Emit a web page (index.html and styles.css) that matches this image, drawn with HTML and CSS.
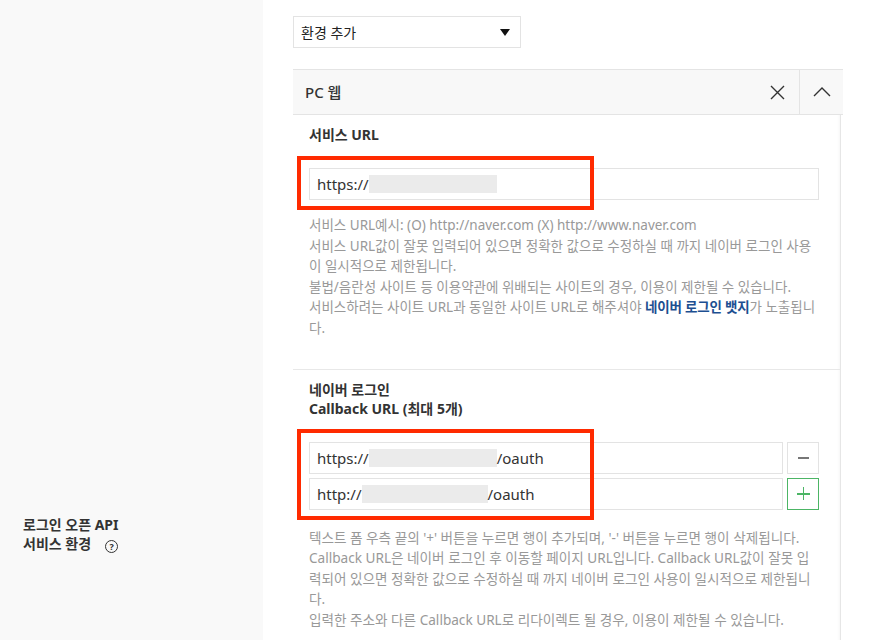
FILE: index.html
```html
<!DOCTYPE html>
<html lang="ko">
<head>
<meta charset="utf-8">
<title>로그인 오픈 API 서비스 환경</title>
<link rel="stylesheet" href="styles.css">
</head>
<body>
<div class="api-row">
  <div class="api-head">
    <div class="head-title">로그인 오픈 API<br>서비스 환경<span class="q-icon">?</span></div>
  </div>

  <div class="api-cell">
    <div class="env-select">환경 추가<span class="caret"></span></div>

    <div class="env-panel">
      <div class="env-title">
        <span class="env-name">PC 웹</span>
        <button class="icon-btn" type="button">
          <svg width="15" height="15" viewBox="0 0 15 15"><path d="M1 1l13 13M14 1L1 14" stroke="#333" stroke-width="1.4" fill="none"/></svg>
        </button>
        <button class="icon-btn fold" type="button">
          <svg width="18" height="10" viewBox="0 0 18 10"><path d="M1 9l8-8 8 8" stroke="#333" stroke-width="1.4" fill="none"/></svg>
        </button>
      </div>

      <div class="env-body">
        <div class="env-section">
          <div class="field-label">서비스 URL</div>
          <div class="url-group">
            <div class="url-input">https://<span class="blur blur-a"></span></div>
            <span class="mark mark-one"></span>
          </div>
          <p class="help">서비스 URL예시: (O) http://naver.com (X) http://www.naver.com<br>
          서비스 URL값이 잘못 입력되어 있으면 정확한 값으로 수정하실 때 까지 네이버 로그인 사용이 일시적으로 제한됩니다.<br>
          불법/음란성 사이트 등 이용약관에 위배되는 사이트의 경우, 이용이 제한될 수 있습니다.<br>
          서비스하려는 사이트 URL과 동일한 사이트 URL로 해주셔야 <b class="link">네이버 로그인 뱃지</b>가 노출됩니다.</p>
        </div>

        <div class="env-section">
          <div class="field-label">네이버 로그인<br>Callback URL (최대 5개)</div>
          <div class="url-group">
            <div class="url-row">
              <div class="url-input">https://<span class="blur blur-a"></span>/oauth</div>
              <button class="row-btn" type="button"><span class="minus"></span></button>
            </div>
            <div class="url-row">
              <div class="url-input">http://<span class="blur blur-b"></span>/oauth</div>
              <button class="row-btn add" type="button"><span class="plus"></span></button>
            </div>
            <span class="mark mark-two"></span>
          </div>
          <p class="help help-callback">텍스트 폼 우측 끝의 '+' 버튼을 누르면 행이 추가되며, '-' 버튼을 누르면 행이 삭제됩니다.<br>
          Callback URL은 네이버 로그인 후 이동할 페이지 URL입니다. Callback URL값이 잘못 입력되어 있으면 정확한 값으로 수정하실 때 까지 네이버 로그인 사용이 일시적으로 제한됩니다.<br>
          입력한 주소와 다른 Callback URL로 리다이렉트 될 경우, 이용이 제한될 수 있습니다.</p>
        </div>
      </div>
    </div>
  </div>
</div>
</body>
</html>
```

FILE: styles.css
```css
body {
  margin: 0;
  background: #fff;
  font-family: "Noto Sans", "Noto Sans CJK KR", sans-serif;
  color: #333;
}

.api-row {
  display: flex;
  align-items: stretch;
  min-height: 640px;
}

.api-head {
  width: 263px;
  flex-shrink: 0;
  background: #f9f9f9;
  padding: 515px 0 0 23px;
  box-sizing: border-box;
}

.head-title {
  font-size: 14px;
  font-weight: 700;
  line-height: 19px;
  color: #333;
}

.q-icon {
  display: inline-flex;
  align-items: center;
  justify-content: center;
  width: 11px;
  height: 11px;
  margin-left: 14px;
  border: 1.2px solid #333;
  border-radius: 50%;
  font-size: 9px;
  font-weight: 700;
  line-height: 1;
  vertical-align: -1px;
}

.api-cell {
  flex: 1;
  padding: 16px 0 0 30px;
}

.env-select {
  width: 228px;
  height: 32px;
  box-sizing: border-box;
  border: 1px solid #e3e3e3;
  padding: 0 10px 0 7px;
  display: flex;
  align-items: center;
  justify-content: space-between;
  font-size: 14px;
  color: #222;
}

.caret {
  width: 0;
  height: 0;
  border-left: 5px solid transparent;
  border-right: 5px solid transparent;
  border-top: 7px solid #111;
}

.env-panel {
  width: 550px;
  margin-top: 21px;
}

.env-title {
  display: flex;
  height: 46px;
  box-sizing: border-box;
  border-top: 1px solid #e4e4e4;
  border-bottom: 1px solid #e4e4e4;
  background: #f8f8f8;
}

.env-name {
  flex: 1;
  padding-left: 12px;
  line-height: 44px;
  font-size: 15px;
  font-weight: 500;
}

.icon-btn {
  width: 44px;
  border: 0;
  padding: 0;
  background: transparent;
  display: flex;
  align-items: center;
  justify-content: center;
}

.icon-btn.fold {
  border-left: 1px solid #e4e4e4;
}

.env-body {
  width: 548px;
  box-sizing: border-box;
  border-right: 1px solid #e6e6e6;
  box-shadow: inset -3px 0 3px -2px rgba(0, 0, 0, 0.04);
}

.env-section {
  padding: 10px 21px 30px 16px;
  border-bottom: 1px solid #e8e8e8;
}

.field-label {
  font-size: 14px;
  font-weight: 700;
  line-height: 19px;
  margin-bottom: 24px;
}

.url-group {
  position: relative;
}

.url-row {
  display: flex;
  gap: 4px;
  margin-bottom: 4px;
}

.url-row:last-of-type {
  margin-bottom: 0;
}

.url-input {
  flex: 1;
  height: 32px;
  box-sizing: border-box;
  border: 1px solid #e3e3e3;
  padding: 0 7px;
  display: flex;
  align-items: center;
  font-size: 15px;
  color: #333;
  white-space: nowrap;
}

.blur {
  display: inline-block;
  height: 18px;
  background: #ebebeb;
}

.blur-a { width: 128px; }
.blur-b { width: 126px; }

.row-btn {
  width: 32px;
  height: 32px;
  flex-shrink: 0;
  border: 1px solid #e3e3e3;
  background: #fff;
  padding: 0;
  display: flex;
  align-items: center;
  justify-content: center;
}

.row-btn.add {
  border-color: #4cb565;
}

.minus {
  width: 11px;
  height: 2px;
  background: #777;
}

.plus {
  position: relative;
  width: 13px;
  height: 13px;
}

.plus::before,
.plus::after {
  content: "";
  position: absolute;
  background: #4cb565;
}

.plus::before {
  left: 0;
  top: 6px;
  width: 13px;
  height: 1.5px;
}

.plus::after {
  left: 6px;
  top: 0;
  width: 1.5px;
  height: 13px;
}

.mark {
  position: absolute;
  left: -12px;
  width: 297px;
  box-sizing: border-box;
  border: 4px solid #ff2a00;
  pointer-events: none;
}

.mark-one {
  top: -12px;
  height: 54px;
}

.mark-two {
  top: -13px;
  height: 91px;
}

.help {
  margin: 15px 0 0;
  font-size: 13.5px;
  line-height: 20.6px;
  color: #999;
  word-break: break-all;
}

.help-callback {
  margin-top: 18px;
  font-size: 13.6px;
}

.link {
  color: #1d4f91;
  letter-spacing: -0.2px;
}
```
